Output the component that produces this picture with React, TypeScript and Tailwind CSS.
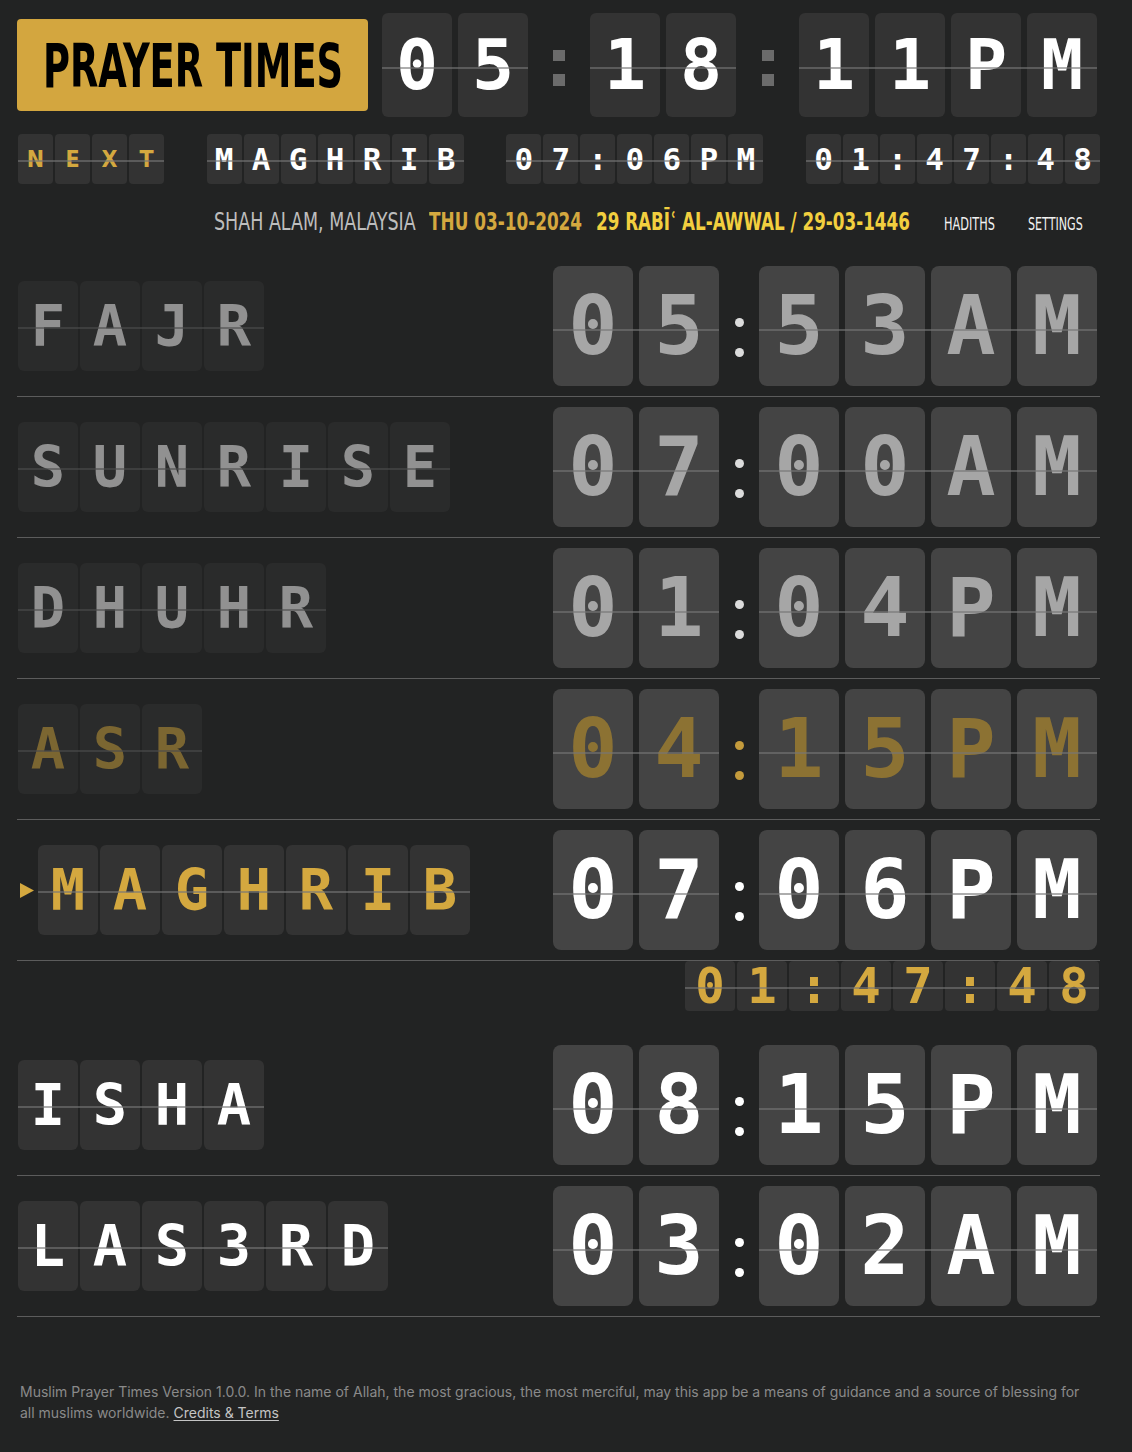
import { useLayoutEffect, useRef, useState, type ReactNode } from "react";

type State = "past" | "current" | "next" | "future";

type Prayer = {
	name: string;
	time: string;
	state: State;
};

const prayers: Prayer[] = [
	{ name: "FAJR", time: "0553AM", state: "past" },
	{ name: "SUNRISE", time: "0700AM", state: "past" },
	{ name: "DHUHR", time: "0104PM", state: "past" },
	{ name: "ASR", time: "0415PM", state: "current" },
	{ name: "MAGHRIB", time: "0706PM", state: "next" },
	{ name: "ISHA", time: "0815PM", state: "future" },
	{ name: "LAS3RD", time: "0302AM", state: "future" },
];

// squeezes text into the box width (stands in for the condensed display font)
function Fit({ className, children }: { className: string; children: ReactNode }) {
	const outer = useRef<HTMLSpanElement>(null);
	const inner = useRef<HTMLSpanElement>(null);
	const [k, setK] = useState(1);

	useLayoutEffect(() => {
		const measure = () => {
			if (!outer.current || !inner.current) return;
			const natural = inner.current.offsetWidth;
			if (natural) setK(outer.current.clientWidth / natural);
		};
		measure();
		document.fonts?.ready.then(measure);
	}, []);

	return (
		<span ref={outer} className={`inline-block ${className}`}>
			<span ref={inner} className="inline-block origin-left whitespace-nowrap" style={{ transform: `scaleX(${k})` }}>
				{children}
			</span>
		</span>
	);
}

function SplitLine({ pos = "top-[calc(50%+2px)]" }: { pos?: string }) {
	return <div className={`pointer-events-none absolute inset-x-0 h-[2px] -translate-y-1/2 bg-[#777777]/60 ${pos}`} />;
}

function BigTile({ ch }: { ch: string }) {
	return (
		<div className="flex h-[104px] w-[70px] items-center justify-center rounded-[6px] bg-[#333333] text-[70px] leading-none text-white">
			{ch}
		</div>
	);
}

function BigColon() {
	return (
		<div className="flex flex-col items-center gap-[13px] pt-[6px]">
			<div className="h-[11px] w-[12px] bg-[#6b6b6b]" />
			<div className="h-[12px] w-[12px] bg-[#6b6b6b]" />
		</div>
	);
}

function SmallGroup({ text, className }: { text: string; className: string }) {
	return (
		<div className="relative flex gap-[2px]">
			{text.split("").map((ch, i) => (
				<div key={i} className={`flex h-[50px] w-[35px] items-center justify-center rounded-[4px] bg-[#333333] leading-none ${className}`}>
					{ch}
				</div>
			))}
			<SplitLine />
		</div>
	);
}

function NameTiles({ p }: { p: Prayer }) {
	const dim = p.state === "past" || p.state === "current";
	const color = p.state === "current" || p.state === "next" ? "text-[#d4a83f]" : "text-white";
	return (
		<div className={`flex items-center ${dim ? "opacity-50" : ""}`}>
			{p.state === "next" ? (
				<svg width="14" height="15" viewBox="0 0 14 15" className="ml-[3px] mr-[4px]">
					<polygon points="0,0 14,7.5 0,15" fill="#d4a83f" />
				</svg>
			) : (
				<div className="w-px" />
			)}
			<div className="relative flex gap-[2px]">
				{p.name.split("").map((ch, i) => (
					<div key={i} className={`flex h-[90px] w-[60px] items-center justify-center rounded-[6px] bg-[#333333] text-[57px] leading-none ${color}`}>
						{ch}
					</div>
				))}
				<SplitLine />
			</div>
		</div>
	);
}

function TimeTiles({ p }: { p: Prayer }) {
	const digit =
		p.state === "past" ? "text-[#a6a6a6]" : p.state === "current" ? "text-[#8c7233]" : "text-white";
	const dot = p.state === "past" ? "bg-[#dcdcdc]" : p.state === "current" ? "bg-[#c49b3c]" : "bg-white";
	const tile = (ch: string, i: number) => (
		<div key={i} className={`flex h-[120px] w-[80px] items-center justify-center rounded-[8px] bg-[#444444] text-[82px] leading-none ${digit}`}>
			{ch}
		</div>
	);
	const chars = p.time.split("");
	return (
		<div className="flex gap-[6px]">
			<div className="relative flex gap-[6px]">
				{chars.slice(0, 2).map(tile)}
				<SplitLine pos="top-[calc(50%+4px)]" />
			</div>
			<div className="flex w-[28px] flex-col items-center gap-[21px] pt-[52px]">
				<div className={`h-[9px] w-[9px] rounded-full ${dot}`} />
				<div className={`h-[9px] w-[9px] rounded-full ${dot}`} />
			</div>
			<div className="relative flex gap-[6px]">
				{chars.slice(2).map((ch, i) => tile(ch, i + 2))}
				<SplitLine pos="top-[calc(50%+4px)]" />
			</div>
		</div>
	);
}

function PrayerRow({ p }: { p: Prayer }) {
	return (
		<div className="flex items-center justify-between border-b border-[#5c5c5c] py-[10px] pr-[3px]">
			<NameTiles p={p} />
			<TimeTiles p={p} />
		</div>
	);
}

function Countdown() {
	return (
		<div className="mb-[24px] flex justify-end pr-[1px]">
			<div className="relative flex gap-[2px]">
				{"01:47:48".split("").map((ch, i) => (
					<div key={i} className="flex h-[50px] w-[50px] items-center justify-center rounded-[4px] bg-[#333333] text-[49px] leading-none text-[#d4a83f]">
						{ch}
					</div>
				))}
				<SplitLine />
			</div>
		</div>
	);
}

export default function App() {
	const narrow = "font-['Liberation_Sans_Narrow','DejaVu_Sans_Condensed','Liberation_Sans',sans-serif]";
	return (
		<div className="min-h-screen bg-[#222323] pb-[29px] pl-[17px] pr-[32px] pt-[13px] font-['DejaVu_Sans_Mono',monospace] font-bold">
			{/* header */}
			<div className="flex items-center gap-[14px]">
				<div className="flex h-[92px] w-[351px] items-center justify-center rounded-[4px] bg-[#d3a63f]">
					<Fit className={`w-[300px] ${narrow} text-[61px] font-bold leading-none text-black`}>PRAYER TIMES</Fit>
				</div>
				<div className="flex items-center">
					<div className="relative flex gap-[6px]">
						<BigTile ch="0" />
						<BigTile ch="5" />
						<SplitLine pos="top-[calc(50%+3px)]" />
					</div>
					<div className="flex w-[62px] justify-center">
						<BigColon />
					</div>
					<div className="relative flex gap-[6px]">
						<BigTile ch="1" />
						<BigTile ch="8" />
						<SplitLine pos="top-[calc(50%+3px)]" />
					</div>
					<div className="flex w-[63px] justify-center">
						<BigColon />
					</div>
					<div className="relative flex gap-[6px]">
						<BigTile ch="1" />
						<BigTile ch="1" />
						<BigTile ch="P" />
						<BigTile ch="M" />
						<SplitLine pos="top-[calc(50%+3px)]" />
					</div>
				</div>
			</div>

			{/* next prayer strip */}
			<div className="mt-[17px] flex justify-between pl-px">
				<SmallGroup text="NEXT" className={`${narrow} text-[23px] font-bold text-[#d4a83f]`} />
				<SmallGroup text="MAGHRIB" className="text-[31px] text-white" />
				<SmallGroup text="07:06PM" className="text-[31px] text-white" />
				<SmallGroup text="01:47:48" className="text-[31px] text-white" />
			</div>

			{/* location, dates, links */}
			<div className={`flex h-[72px] items-baseline justify-end pr-[17px] pt-[25px] ${narrow} leading-[25px]`}>
				<Fit className="w-[202px] text-[25px] font-normal text-[#bdbdbd]">SHAH ALAM, MALAYSIA</Fit>
				<Fit className="ml-[13px] w-[153px] text-[25px] font-bold text-[#d4a83f]">THU 03-10-2024</Fit>
				<Fit className="ml-[14px] w-[314px] text-[25px] font-bold text-[#f2cf3f]">29 RABĪʿ AL-AWWAL / 29-03-1446</Fit>
				<Fit className="ml-[34px] w-[51px] text-[18px] font-normal text-[#f2f2f2]">HADITHS</Fit>
				<Fit className="ml-[33px] w-[55px] text-[18px] font-normal text-[#f2f2f2]">SETTINGS</Fit>
			</div>

			{/* prayer list */}
			{prayers.map((p) => (
				<div key={p.name}>
					<PrayerRow p={p} />
					{p.state === "next" && <Countdown />}
				</div>
			))}

			<p className="px-[3px] pt-[64px] font-['Inter','Noto_Sans',sans-serif] text-[14px] font-normal leading-[21px] text-[#8a8a8a]">
				Muslim Prayer Times Version 1.0.0. In the name of Allah, the most gracious, the most merciful, may this app be a means of guidance and a source of blessing for all muslims worldwide.{" "}
				<a href="#" className="text-[#c4c4c4] underline underline-offset-2">Credits &amp; Terms</a>
			</p>
		</div>
	);
}
